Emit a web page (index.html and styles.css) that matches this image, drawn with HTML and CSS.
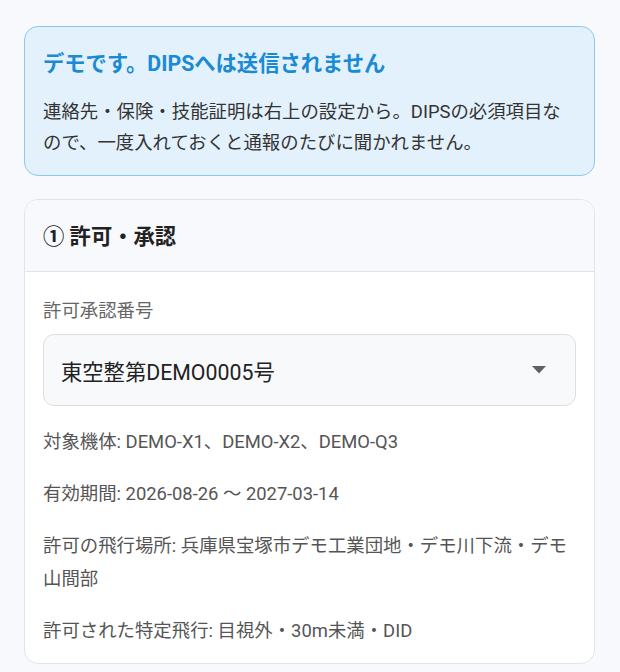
FILE: index.html
```html
<!DOCTYPE html>
<html lang="ja">
<head>
<meta charset="utf-8">
<title>DIPS デモ</title>
<link rel="stylesheet" href="styles.css">
</head>
<body>
<main class="page">
  <section class="notice">
    <h2 class="notice-title">デモです。DIPSへは送信されません</h2>
    <p class="notice-text">連絡先・保険・技能証明は右上の設定から。DIPSの必須項目なので、一度入れておくと通報のたびに聞かれません。</p>
  </section>
  <section class="card">
    <header class="card-head">
      <h3 class="card-title">① 許可・承認</h3>
    </header>
    <div class="card-body">
      <label class="field-label">許可承認番号</label>
      <div class="select">
        <span class="select-value">東空整第DEMO0005号</span>
        <svg class="select-arrow" width="14" height="8" viewBox="0 0 14 8"><path d="M0 0h14L7 7.5z" fill="#5f6266"/></svg>
      </div>
      <p class="info">対象機体: DEMO-X1、DEMO-X2、DEMO-Q3</p>
      <p class="info">有効期間: 2026-08-26 〜 2027-03-14</p>
      <p class="info">許可の飛行場所: 兵庫県宝塚市デモ工業団地・デモ川下流・デモ山間部</p>
      <p class="info">許可された特定飛行: 目視外・30m未満・DID</p>
    </div>
  </section>
</main>
</body>
</html>
```
FILE: styles.css
```css
* { box-sizing: border-box; }
html, body {
  margin: 0;
  padding: 0;
  background: #f7f9fc;
}
body {
  font-family: Roboto, "Noto Sans CJK JP", sans-serif;
  color: #333;
}
.page {
  padding: 26px 25px 0 24px;
  display: flex;
  flex-direction: column;
  gap: 23px;
}
.notice {
  background: #e3f1fc;
  border: 1px solid #8fc8ee;
  border-radius: 14px;
  padding: 22px 18px 17px 18px;
}
.notice-title {
  margin: 0;
  font-size: 21.3px;
  line-height: 29px;
  font-weight: 700;
  color: #1b8ad5;
}
.notice-text {
  margin: 18px 0 0 0;
  font-size: 18.4px;
  line-height: 31px;
  color: #333;
}
.card {
  background: #fff;
  border: 1px solid #e2e4e8;
  border-radius: 14px;
  overflow: hidden;
}
.card-head {
  background: #f7f9fc;
  border-bottom: 1px solid #e2e4e8;
  padding: 22px 18px 19px 18px;
}
.card-title {
  margin: 0;
  font-size: 21.3px;
  line-height: 30px;
  font-weight: 700;
  color: #222;
}
.card-body {
  padding: 24px 18px 16px 18px;
  display: flex;
  flex-direction: column;
}
.field-label {
  font-size: 18.4px;
  line-height: 29px;
  color: #666;
}
.select {
  margin-top: 9px;
  height: 72px;
  background: #f8f9fb;
  border: 1px solid #dcdfe4;
  border-radius: 11px;
  display: flex;
  align-items: center;
  justify-content: space-between;
  padding: 0 29px 0 17px;
}
.select-value {
  font-size: 21.3px;
  color: #222;
}
.select-arrow { display: block; }
.info {
  margin: 19px 0 0 0;
  font-size: 18.4px;
  line-height: 33px;
  color: #555;
}
```
